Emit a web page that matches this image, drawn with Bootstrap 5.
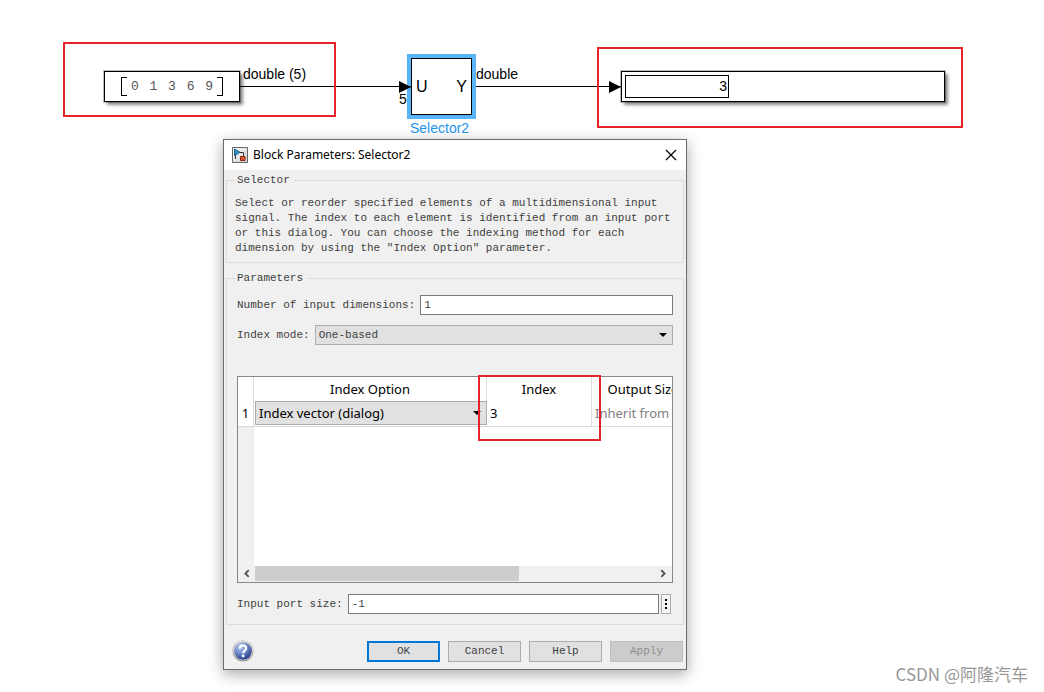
<!DOCTYPE html>
<html lang="en">
<head>
<meta charset="utf-8">
<meta name="viewport" content="width=device-width, initial-scale=1">
<title>Block Parameters: Selector2</title>
<link href="https://cdn.jsdelivr.net/npm/bootstrap@5.3.0/dist/css/bootstrap.min.css" rel="stylesheet">
<style>
  body { background: #fff; color: #000; font-family: "Liberation Sans", Arial, sans-serif; font-size: 14px; line-height: 16px; }
  .model { min-height: 100vh; }

  /* Nodes on the model canvas */
  .node, .wire, .tag, .mark-box, .dialog-win { position: absolute; }
  .node { background: #fff; border: 1px solid #000; box-shadow: 0 0 0 1px rgba(0,0,0,.25), 3px 3px 3px rgba(0,0,0,.45); }
  .tag { white-space: nowrap; }
  .wire { height: 12px; top: 81px; }
  .wire::before { content: ""; position: absolute; left: 0; right: 0; top: 5px; border-top: 1px solid #000; }
  .wire.arrow::after { content: ""; position: absolute; right: 0; top: 0; border-left: 12px solid #000; border-top: 6px solid transparent; border-bottom: 6px solid transparent; }
  .constant { left: 104px; top: 71px; width: 136px; height: 31px; }
  .vector { width: 102px; height: 19px; padding: 0 10px; font: 13px/19px "Liberation Mono", monospace; color: #555; }
  .vector::before, .vector::after { content: ""; position: absolute; top: 0; bottom: 0; width: 6px; border: 1px solid #000; }
  .vector::before { left: 0; border-right: 0; }
  .vector::after { right: 0; border-left: 0; }
  .selector { left: 411px; top: 58px; width: 61px; height: 57px; box-shadow: 0 0 0 4px #5ab4f8; font-size: 16px; padding: 0 4px; }
  .display { left: 621px; top: 71px; width: 324px; height: 31px; padding: 3px; }
  .display-value { width: 104px; height: 23px; border: 1px solid #000; padding-right: 1px; line-height: 21px; }
  .mark-box { border: 2px solid #e8222b; pointer-events: none; }

  /* Dialog */
  .dialog-win { left: 223px; top: 139px; width: 464px; background: #f0f0f0; border: 1px solid #6b6b6b; box-shadow: 0 4px 14px rgba(0,0,0,.35); font: 11px/15px "Liberation Mono", monospace; color: #404040; }
  .titlebar { height: 30px; background: #fff; padding: 0 8px; gap: 5px; color: #000; font: 12px/16px "Noto Sans", sans-serif; }
  .titlebar button { border: 0; background: none; padding: 0; line-height: 0; }
  .params-form { padding-top: 3px; }
  .group { border: 1px solid #dcdcdc; margin: 0 2px; padding: 8px 10px 6px 8px; }
  .group legend { float: none; width: auto; font-size: 11px; line-height: 15px; margin: 0; padding: 0 4px 0 2px; }
  .group.params { padding: 9px 10px 10px 10px; margin-top: 8px; }
  .params legend { margin-left: -2px; }
  .line-row { display: flex; align-items: center; gap: 5px; }
  .dialog-win .form-control, .dialog-win .form-select { border-radius: 0; font: inherit; color: #404040; height: 20px; min-height: 0; min-width: 0; padding: 0 3px; border: 1px solid #7a7a7a; box-shadow: none; }
  .dialog-win .form-select { border-color: #adadad; background-color: #e1e1e1;
    --bs-form-select-bg-img: url("data:image/svg+xml,%3Csvg xmlns='http://www.w3.org/2000/svg' viewBox='0 0 8 4'%3E%3Cpath d='M0 0h8L4 4z'/%3E%3C/svg%3E");
    background-image: var(--bs-form-select-bg-img); background-size: 8px 4px; background-position: right 5px center; }
  .more { width: 10px; height: 20px; border: 1px solid #adadad; background: #f4f4f4; padding: 0; margin: 0 2px 0 -3px; display: flex; flex: none; align-items: center; justify-content: center; }

  .grid-frame { margin-top: 31px; border: 1px solid #828790; background: linear-gradient(90deg, #f0f0f0 16px, #fff 16px); font: 13px/16px "Noto Sans", sans-serif; color: #000; height: 207px; display: flex; flex-direction: column; }
  .grid-view { overflow: hidden; flex: 1; }
  .grid-view table { table-layout: fixed; width: 457px; border-collapse: separate; border-spacing: 0; background: #fff; }
  .grid-view th { font-weight: 400; text-align: center; height: 24px; padding: 0; }
  .grid-view td { height: 26px; padding: 4px 3px 0; vertical-align: top; border-bottom: 1px solid #dcdcdc; white-space: nowrap; overflow: hidden; }
  .grid-view tr > * { border-right: 1px solid #dcdcdc; }
  .grid-view td.pick { padding: 0 0 0 1px; border-right: 0; }
  .grid-view .form-select { height: 24px; color: #000; }
  .c-num { width: 16px; } .c-opt { width: 233px; } .c-idx { width: 105px; }
  .hbar { height: 16px; background: #f0f0f0; display: flex; }
  .hbar button { width: 17px; height: 15px; border: 0; padding: 0; background: none; line-height: 0; }
  .hbar-track { flex: 1; height: 15px; }
  .hbar-thumb { width: 66%; height: 15px; background: #cdcdcd; }

  .foot { padding: 15px 3px 7px 8px; gap: 8px; }
  .foot .btn { width: 73px; height: 21px; padding: 0; border-radius: 0; border: 1px solid #adadad; background: #e1e1e1; color: #404040; font: inherit; line-height: 19px; }
  .foot .btn.main-action { border: 2px solid #0078d7; line-height: 17px; }
  .foot .btn:disabled { background: #ccc; border-color: #bfbfbf; color: #8c8c8c; opacity: 1; }
  .foot .help-ball { border: 0; background: none; padding: 0; line-height: 0; }
  .credit { position: absolute; right: 16px; bottom: 6px; font: 17px/24px "Noto Sans CJK SC", sans-serif; color: #979797; }
</style>
</head>
<body>
<main class="model position-relative overflow-hidden">
  <div class="wire" style="left:240px;width:171px"></div>
  <div class="wire" style="left:472px;width:149px"></div>

  <div class="node constant d-flex align-items-center justify-content-center">
    <div class="vector position-relative d-flex justify-content-between"><span>0</span><span>1</span><span>3</span><span>6</span><span>9</span></div>
  </div>
  <span class="tag" style="left:243px;top:66px">double (5)</span>
  <span class="tag" style="left:399px;top:91px">5</span>
  <div class="node selector d-flex align-items-center justify-content-between"><span>U</span><span>Y</span></div>
  <div class="wire arrow" style="left:390px;width:21px"></div>
  <span class="tag" style="left:476px;top:66px">double</span>
  <span class="tag" style="left:410px;top:120px;color:#1e96ee">Selector2</span>
  <div class="wire arrow" style="left:600px;width:21px"></div>
  <div class="node display"><div class="display-value text-end">3</div></div>

  <section class="dialog-win" role="dialog" aria-labelledby="dlgTitle">
    <header class="titlebar d-flex align-items-center">
      <svg width="16" height="16" viewBox="0 0 16 16" aria-hidden="true"><defs><linearGradient id="ic" x2="1" y2="1"><stop stop-color="#fff"/><stop offset="1" stop-color="#c9c9c9"/></linearGradient></defs><path d="M.5.5h15v15H.5z" fill="url(#ic)" stroke="#666"/><path d="M7 5.500h4.500v4M3.500 8v4" fill="none" stroke="#333"/><path d="M2.500 2v6.500L8 5.300z" fill="#2c9ad0" stroke="#13577e"/><path d="M8.500 9.500h4.500v4H8.500z" fill="#e0582c" stroke="#8a2a12"/></svg>
      <span id="dlgTitle" class="flex-grow-1">Block Parameters: Selector2</span>
      <button type="button" aria-label="Close"><svg width="14" height="14" viewBox="0 0 14 14"><path d="M2 2l10 10M12 2L2 12" stroke="#000" stroke-width="1.200"/></svg></button>
    </header>

    <form class="params-form">
      <fieldset class="group">
        <legend>Selector</legend>
        <p class="mb-0">Select or reorder specified elements of a multidimensional input<br>signal. The index to each element is identified from an input port<br>or this dialog. You can choose the indexing method for each<br>dimension by using the "Index Option" parameter.</p>
      </fieldset>

      <fieldset class="group params">
        <legend>Parameters</legend>
        <div class="line-row">
          <label for="dims" class="text-nowrap">Number of input dimensions:</label>
          <input id="dims" type="text" class="form-control" value="1">
        </div>
        <div class="line-row" style="margin-top:10px">
          <label for="mode" class="text-nowrap">Index mode:</label>
          <select id="mode" class="form-select"><option>One-based</option></select>
        </div>

        <div class="grid-frame">
          <div class="grid-view">
            <table>
              <colgroup><col class="c-num"><col class="c-opt"><col class="c-idx"><col></colgroup>
              <thead><tr><th></th><th>Index Option</th><th>Index</th><th>Output Size</th></tr></thead>
              <tbody><tr>
                <td class="text-center px-0">1</td>
                <td class="pick"><select class="form-select" aria-label="Index Option"><option>Index vector (dialog)</option></select></td>
                <td>3</td>
                <td style="color:#808080">Inherit from "Index"</td>
              </tr></tbody>
            </table>
          </div>
          <div class="hbar">
            <button type="button" aria-label="Scroll left"><svg width="9" height="9" viewBox="0 0 8 8"><path d="M6 1L3 4l3 3" fill="none" stroke="#505050" stroke-width="1.600"/></svg></button>
            <div class="hbar-track"><div class="hbar-thumb"></div></div>
            <button type="button" aria-label="Scroll right"><svg width="9" height="9" viewBox="0 0 8 8"><path d="M2 1l3 3-3 3" fill="none" stroke="#505050" stroke-width="1.600"/></svg></button>
          </div>
        </div>

        <div class="line-row" style="margin-top:11px">
          <label for="port" class="text-nowrap">Input port size:</label>
          <input id="port" type="text" class="form-control" value="-1">
          <button type="button" class="more" aria-label="More options"><svg width="2" height="10" viewBox="0 0 2 10"><path d="M0 0h2v2H0zM0 4h2v2H0zM0 8h2v2H0z"/></svg></button>
        </div>
      </fieldset>

      <footer class="foot d-flex align-items-center">
        <button type="button" class="help-ball me-auto" aria-label="About this block"><svg width="22" height="22" viewBox="0 0 22 22"><defs><radialGradient id="hb" cx=".35" cy=".25" r=".8"><stop stop-color="#b9c9ef"/><stop offset=".5" stop-color="#6f89cb"/><stop offset="1" stop-color="#1d3580"/></radialGradient></defs><circle cx="11" cy="11" r="10.500" fill="#8d8d8d"/><circle cx="11" cy="10.500" r="10" fill="#dcdcdc"/><circle cx="11" cy="11" r="8.800" fill="url(#hb)"/><path d="M7.800 8.500c0-4 6.400-4 6.400-.3 0 2.300-3 2.500-3 5" fill="none" stroke="#fff" stroke-width="2.200"/><circle cx="11.200" cy="16" r="1.400" fill="#fff"/></svg></button>
        <button type="button" class="btn main-action">OK</button>
        <button type="button" class="btn">Cancel</button>
        <button type="button" class="btn">Help</button>
        <button type="button" class="btn" disabled>Apply</button>
      </footer>
    </form>
  </section>

  <div class="mark-box" style="left:63px;top:42px;width:273px;height:75px"></div>
  <div class="mark-box" style="left:597px;top:47px;width:366px;height:81px"></div>
  <div class="mark-box" style="left:478px;top:375px;width:123px;height:66px"></div>
  <div class="credit">CSDN @阿隆汽车</div>
</main>
<script src="https://cdn.jsdelivr.net/npm/bootstrap@5.3.0/dist/js/bootstrap.bundle.min.js"></script>
</body>
</html>
